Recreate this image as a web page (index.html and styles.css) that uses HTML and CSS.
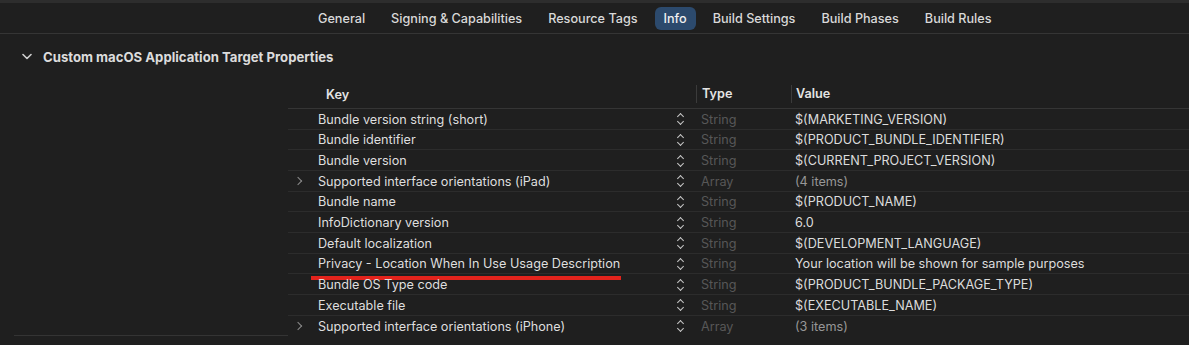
FILE: index.html
```html
<!DOCTYPE html>
<html lang="en">
<head>
  <meta charset="UTF-8" />
  <title>Info</title>
  <link rel="stylesheet" href="styles.css">
</head>
<body>
  <div class="topstrip"></div>

  <nav class="tabbar">
    <span class="tab">General</span>
    <span class="tab">Signing &amp; Capabilities</span>
    <span class="tab">Resource Tags</span>
    <span class="tab active">Info</span>
    <span class="tab">Build Settings</span>
    <span class="tab">Build Phases</span>
    <span class="tab">Build Rules</span>
  </nav>

  <div class="section-head">
    <svg class="chev-down" width="10" height="7" viewBox="0 0 10 7"><polyline points="1,1.5 5,5.5 9,1.5" fill="none" stroke="#cfcfcf" stroke-width="1.6" stroke-linecap="round" stroke-linejoin="round"/></svg>
    <span>Custom macOS Application Target Properties</span>
  </div>

  <div class="content">
    <div class="sidebar"></div>
    <div class="plist">
      <div class="plist-head">
        <div class="col-key">Key</div>
        <div class="col-type">Type</div>
        <div class="col-value">Value</div>
      </div>

      <div class="row">
        <div class="col-key"><span class="disc"></span><span class="key">Bundle version string (short)</span><span class="stepper"></span></div>
        <div class="col-type">String</div>
        <div class="col-value">$(MARKETING_VERSION)</div>
      </div>
      <div class="row">
        <div class="col-key"><span class="disc"></span><span class="key">Bundle identifier</span><span class="stepper"></span></div>
        <div class="col-type">String</div>
        <div class="col-value">$(PRODUCT_BUNDLE_IDENTIFIER)</div>
      </div>
      <div class="row">
        <div class="col-key"><span class="disc"></span><span class="key">Bundle version</span><span class="stepper"></span></div>
        <div class="col-type">String</div>
        <div class="col-value">$(CURRENT_PROJECT_VERSION)</div>
      </div>
      <div class="row">
        <div class="col-key"><span class="disc closed"></span><span class="key">Supported interface orientations (iPad)</span><span class="stepper"></span></div>
        <div class="col-type">Array</div>
        <div class="col-value muted">(4 items)</div>
      </div>
      <div class="row">
        <div class="col-key"><span class="disc"></span><span class="key">Bundle name</span><span class="stepper"></span></div>
        <div class="col-type">String</div>
        <div class="col-value">$(PRODUCT_NAME)</div>
      </div>
      <div class="row">
        <div class="col-key"><span class="disc"></span><span class="key">InfoDictionary version</span><span class="stepper"></span></div>
        <div class="col-type">String</div>
        <div class="col-value">6.0</div>
      </div>
      <div class="row">
        <div class="col-key"><span class="disc"></span><span class="key">Default localization</span><span class="stepper"></span></div>
        <div class="col-type">String</div>
        <div class="col-value">$(DEVELOPMENT_LANGUAGE)</div>
      </div>
      <div class="row marked">
        <div class="col-key"><span class="disc"></span><span class="key">Privacy - Location When In Use Usage Description</span><span class="stepper"></span></div>
        <div class="col-type">String</div>
        <div class="col-value">Your location will be shown for sample purposes</div>
      </div>
      <div class="row">
        <div class="col-key"><span class="disc"></span><span class="key">Bundle OS Type code</span><span class="stepper"></span></div>
        <div class="col-type">String</div>
        <div class="col-value">$(PRODUCT_BUNDLE_PACKAGE_TYPE)</div>
      </div>
      <div class="row">
        <div class="col-key"><span class="disc"></span><span class="key">Executable file</span><span class="stepper"></span></div>
        <div class="col-type">String</div>
        <div class="col-value">$(EXECUTABLE_NAME)</div>
      </div>
      <div class="row">
        <div class="col-key"><span class="disc closed"></span><span class="key">Supported interface orientations (iPhone)</span><span class="stepper"></span></div>
        <div class="col-type">Array</div>
        <div class="col-value muted">(3 items)</div>
      </div>
    </div>
  </div>
</body>
</html>
```

FILE: styles.css
```css
body {
  margin: 0;
  background-color: #1f1f1f;
  color: #dedede;
  font-family: "Inter", "Liberation Sans", sans-serif;
  font-size: 12.65px;
  height: 100vh;
  overflow: hidden;
}

.topstrip {
  height: 3px;
  background: #2d2d2d;
}

/* tab bar */
.tabbar {
  height: 31px;
  border-bottom: 1px solid #353535;
  display: flex;
  align-items: center;
  gap: 8px;
  padding-left: 309px;
  box-sizing: border-box;
}

.tab {
  padding: 4px 9px;
  border-radius: 6px;
  color: #d9d9d9;
  font-weight: 500;
  line-height: 15px;
}

.tab.active {
  background: #2c4a6d;
  color: #f0f0f0;
}

/* section header */
.section-head {
  height: 45px;
  display: flex;
  align-items: center;
  padding-left: 22px;
  gap: 11px;
  font-weight: 700;
  font-size: 13.15px;
  color: #dcdcdc;
}

/* content */
.content {
  display: flex;
}

.sidebar {
  width: 274px;
  margin-left: 14px;
  border-bottom: 1px solid #343434;
}

.plist {
  flex: 1;
}

.plist-head,
.row {
  display: flex;
}

.plist-head {
  height: 30px;
  border-bottom: 1px solid #353535;
  font-weight: 600;
  color: #e4e4e4;
  align-items: center;
  padding-top: 1px;
  box-sizing: border-box;
}

.col-key {
  width: 408px;
  display: flex;
  align-items: center;
}

.col-type {
  width: 95px;
  padding-left: 5px;
  box-sizing: border-box;
}

.col-value {
  flex: 1;
  padding-left: 4px;
}

.plist-head .col-key {
  padding-left: 38px;
  box-sizing: border-box;
}

.plist-head .col-type,
.plist-head .col-value {
  border-left: 1px solid #3b3b3b;
  line-height: 18px;
}

.row {
  height: 20.67px;
  align-items: center;
  box-sizing: border-box;
  border-bottom: 1px solid #2c2c2c;
  padding-top: 1px;
  position: relative;
}

.row:last-child {
  border-bottom: none;
}

.row .col-type {
  color: #575757;
}

.row .col-value {
  color: #dcdcdc;
}

.row .col-value.muted {
  color: #979797;
}

/* red annotation under the privacy key */
.row.marked::after {
  content: "";
  position: absolute;
  left: 23px;
  top: 22px;
  width: 310px;
  height: 4px;
  background: #e3231c;
}

.disc {
  width: 30px;
  height: 10px;
  flex: none;
  position: relative;
}

.disc.closed::before {
  content: "";
  position: absolute;
  left: 7px;
  top: 2px;
  width: 5px;
  height: 5px;
  border-right: 1.4px solid #8c8c8c;
  border-top: 1.4px solid #8c8c8c;
  transform: rotate(45deg);
}

.key {
  flex: 1;
  white-space: nowrap;
}

.stepper {
  width: 10px;
  height: 12px;
  margin-right: 10px;
  flex: none;
  position: relative;
}

.stepper::before,
.stepper::after {
  content: "";
  position: absolute;
  left: 2px;
  width: 4px;
  height: 4px;
  border-left: 1.6px solid #c8c8c8;
  border-top: 1.6px solid #c8c8c8;
}

.stepper::before {
  top: 1px;
  transform: rotate(45deg);
}

.stepper::after {
  top: 6px;
  transform: rotate(-135deg);
}
```
